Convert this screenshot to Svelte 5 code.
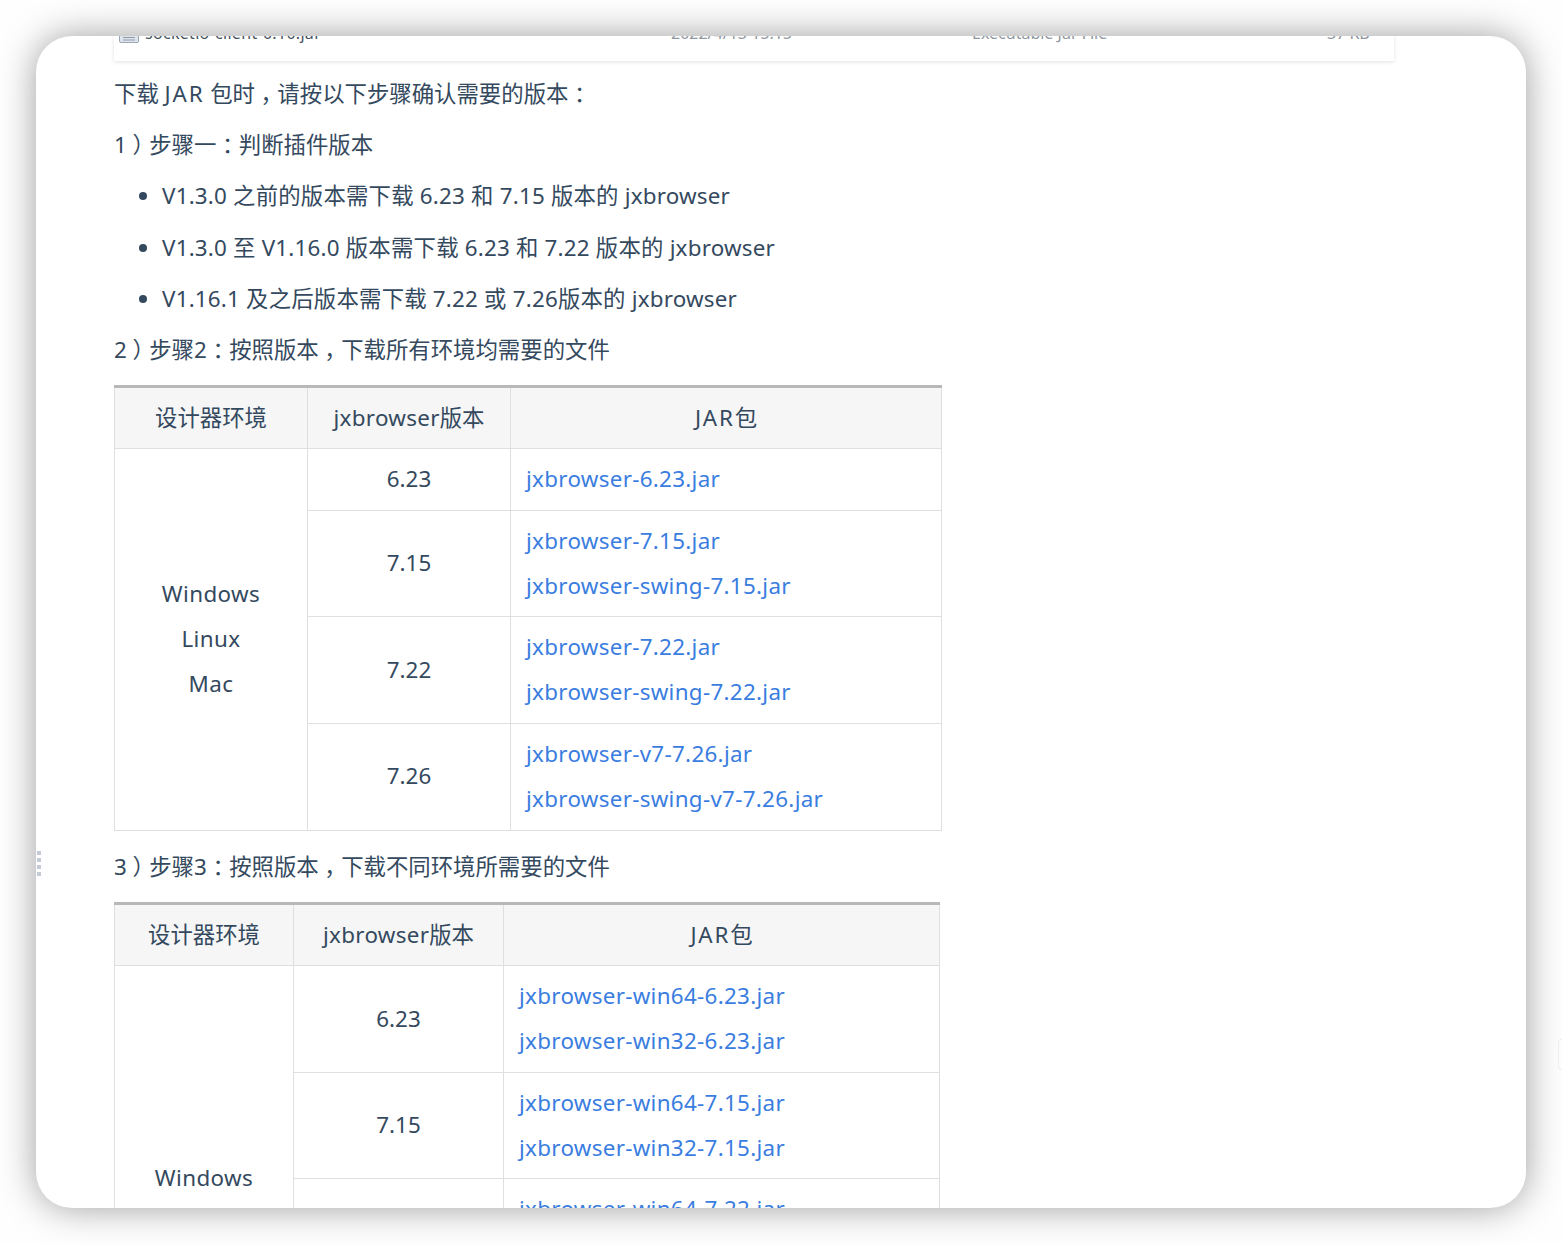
<script>
  const table1 = [
    { v: '6.23', jars: ['jxbrowser-6.23.jar'] },
    { v: '7.15', jars: ['jxbrowser-7.15.jar', 'jxbrowser-swing-7.15.jar'] },
    { v: '7.22', jars: ['jxbrowser-7.22.jar', 'jxbrowser-swing-7.22.jar'] },
    { v: '7.26', jars: ['jxbrowser-v7-7.26.jar', 'jxbrowser-swing-v7-7.26.jar'] }
  ];
  const table2 = [
    { v: '6.23', jars: ['jxbrowser-win64-6.23.jar', 'jxbrowser-win32-6.23.jar'] },
    { v: '7.15', jars: ['jxbrowser-win64-7.15.jar', 'jxbrowser-win32-7.15.jar'] },
    { v: '7.22', jars: ['jxbrowser-win64-7.22.jar', 'jxbrowser-win32-7.22.jar'] },
    { v: '7.26', jars: ['jxbrowser-win64-7.26.jar', 'jxbrowser-win32-7.26.jar'] }
  ];
</script>

<div class="page">
  <div class="window">
    <div class="card">
      <div class="file-row">
        <svg class="file-icon" width="20" height="20" viewBox="0 0 20 20">
          <rect x="0.5" y="0.5" width="19" height="19" rx="1.5" fill="#dfe5ec" stroke="#9aa7b5"/>
          <rect x="3" y="3" width="14" height="9" fill="#f7f9fb"/>
          <path d="M4 14.5h12M4 17h12" stroke="#8d9aa8"/>
        </svg>
        <span class="f-name">socketio-client-0.10.jar</span>
        <span class="f-date">2022/4/13 15:15</span>
        <span class="f-type">Executable Jar File</span>
        <span class="f-size">37 KB</span>
      </div>
    </div>

    <p class="first">下载 <span class="jar">JAR</span> 包时<span class="pc">，</span>请按以下步骤确认需要的版本<span class="pc">：</span></p>
    <p>1<span class="pc">）</span>步骤一<span class="pc">：</span>判断插件版本</p>
    <ul>
      <li>V1.3.0 之前的版本需下载 6.23 和 7.15 版本的 jxbrowser</li>
      <li>V1.3.0 至 V1.16.0 版本需下载 6.23 和 7.22 版本的 jxbrowser</li>
      <li>V1.16.1 及之后版本需下载 7.22 或 7.26版本的 jxbrowser</li>
    </ul>
    <p>2<span class="pc">）</span>步骤2<span class="pc">：</span>按照版本<span class="pc">，</span>下载所有环境均需要的文件</p>

    <table class="t1">
      <colgroup><col class="c1" /><col class="c2" /><col class="c3" /></colgroup>
      <thead><tr><th>设计器环境</th><th><span class="lat-h">jxbrowser</span>版本</th><th><span class="jar">JAR</span>包</th></tr></thead>
      <tbody>
        {#each table1 as row, i}
          <tr>
            {#if i === 0}
              <td rowspan="4" class="center lat">Windows<br />Linux<br />Mac</td>
            {/if}
            <td class="center">{row.v}</td>
            <td>{#each row.jars as jar, j}{#if j > 0}<br />{/if}<a href="#top">{jar}</a>{/each}</td>
          </tr>
        {/each}
      </tbody>
    </table>

    <p class="after">3<span class="pc">）</span>步骤3<span class="pc">：</span>按照版本<span class="pc">，</span>下载不同环境所需要的文件</p>

    <table class="t2">
      <colgroup><col class="c1" /><col class="c2" /><col class="c3" /></colgroup>
      <thead><tr><th>设计器环境</th><th><span class="lat-h">jxbrowser</span>版本</th><th><span class="jar">JAR</span>包</th></tr></thead>
      <tbody>
        {#each table2 as row, i}
          <tr>
            {#if i === 0}
              <td rowspan="4" class="center lat">Windows</td>
            {/if}
            <td class="center">{row.v}</td>
            <td>{#each row.jars as jar, j}{#if j > 0}<br />{/if}<a href="#top">{jar}</a>{/each}</td>
          </tr>
        {/each}
      </tbody>
    </table>

    <div class="drag-handle"><i></i><i></i><i></i><i></i></div>
  </div>
  <div class="edge-handle"></div>
</div>

<style>
  :global(body) {
    margin: 0;
    background: #fff;
  }
  .page {
    position: relative;
    width: 1562px;
    height: 1244px;
    padding: 36px;
    box-sizing: border-box;
    overflow: hidden;
    background: #fefefe;
  }
  .window {
    position: relative;
    width: 1490px;
    height: 1172px;
    box-sizing: border-box;
    padding-left: 78px;
    background: #fff;
    border-radius: 36px;
    overflow: hidden;
    box-shadow: 0 0 36px rgba(0, 0, 0, 0.38);
    font-family: "Noto Sans", "Noto Sans CJK SC", sans-serif;
    font-size: 22.4px;
    line-height: 44.8px;
    color: #34495e;
  }
  .card {
    width: 1280px;
    height: 25px;
    overflow: hidden;
    background: #fff;
    box-shadow: 0 1px 4px rgba(0, 0, 0, 0.12);
  }
  .file-row {
    display: flex;
    align-items: center;
    height: 20px;
    margin-top: -13px;
    padding-left: 5px;
    font-size: 16px;
    line-height: 20px;
    color: #45525f;
  }
  .file-icon { flex: none; margin-right: 6px; }
  .f-name { width: 526px; letter-spacing: 0.3px; }
  .f-date { width: 301px; color: #8f97a0; }
  .f-type { width: 355px; color: #8f97a0; }
  .f-size { color: #8f97a0; }
  p {
    margin: 0 0 6.4px;
  }
  p.first { margin-top: 11px; }
  ul {
    margin: 0;
    padding-left: 48px;
    letter-spacing: 0.2px;
  }
  li {
    margin-bottom: 6.4px;
  }
  .pc {
    font-feature-settings: "halt";
    padding: 0 5.6px;
  }
  .jar { letter-spacing: 1.8px; }
  .lat { letter-spacing: 0.4px; }
  .lat-h { letter-spacing: 0.3px; }
  table {
    border-collapse: collapse;
    table-layout: fixed;
    border-top: 3px solid #b8b8b8;
    margin-top: 12px;
  }
  .t1 { width: 828px; }
  .t1 .c1 { width: 193px; }
  .t1 .c2 { width: 203px; }
  .t2 { width: 826px; }
  .t2 .c1 { width: 179px; }
  .t2 .c2 { width: 210px; }
  th, td {
    border: 1px solid #dfdfdf;
    padding: 8px 15px;
    box-sizing: border-box;
  }
  th {
    background: #f6f6f6;
    font-weight: 400;
    text-align: center;
    border-top: 0;
    padding-top: 8.5px;
    padding-bottom: 7px;
  }
  .center { text-align: center; }
  a {
    color: #3a7de0;
    text-decoration: none;
    letter-spacing: 0.3px;
  }
  p.after { margin: 14.5px 0 11px; }
  .drag-handle {
    position: absolute;
    left: 1px;
    top: 815px;
    display: flex;
    flex-direction: column;
    gap: 3px;
  }
  .drag-handle i {
    display: block;
    width: 4px;
    height: 4px;
    background: #c3ccd6;
  }
  .edge-handle {
    position: absolute;
    left: 1558px;
    top: 1039px;
    width: 8px;
    height: 31px;
    border: 1px solid #eee;
    border-radius: 3px;
    box-sizing: border-box;
  }
</style>
